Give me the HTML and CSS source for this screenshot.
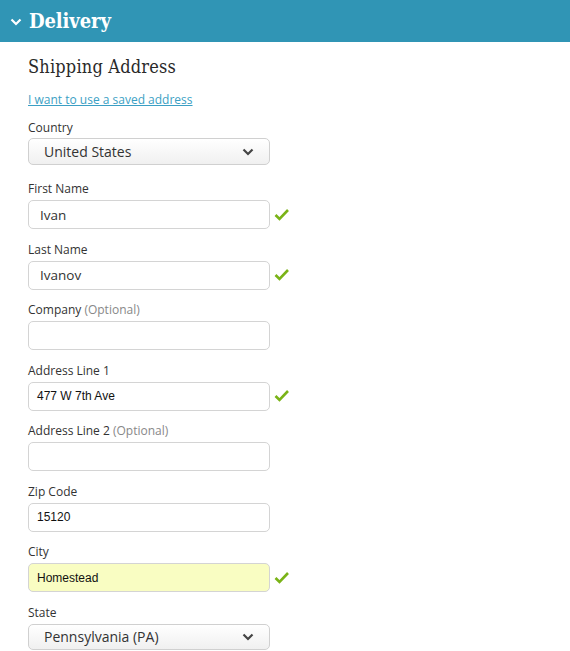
FILE: index.html
```html
<!DOCTYPE html>
<html>
<head>
<meta charset="utf-8">
<link rel="stylesheet" href="styles.css">
</head>
<body>
<div class="header">
  <svg class="chev" width="12" height="10" viewBox="0 0 12 10"><path d="M1.5 2.5 L6 7 L10.5 2.5" fill="none" stroke="#fff" stroke-width="2.2"/></svg>
  <span class="title">Delivery</span>
</div>
<div class="content">
  <h2 class="sub">Shipping Address</h2>
  <a class="link" href="#">I want to use a saved address</a>

  <div class="field first">
    <div class="label">Country</div>
    <div class="select"><span>United States</span><svg width="12" height="8" viewBox="0 0 12 8"><path d="M1.5 1.5 L6 6 L10.5 1.5" fill="none" stroke="#444" stroke-width="2.2"/></svg></div>
  </div>

  <div class="field second">
    <div class="label">First Name</div>
    <div class="row"><div class="input sans">Ivan</div><svg class="check" width="16" height="14" viewBox="0 0 16 14"><path d="M1.5 7 L5.5 11 L14 2" fill="none" stroke="#7ab317" stroke-width="2.6"/></svg></div>
  </div>

  <div class="field">
    <div class="label">Last Name</div>
    <div class="row"><div class="input sans">Ivanov</div><svg class="check" width="16" height="14" viewBox="0 0 16 14"><path d="M1.5 7 L5.5 11 L14 2" fill="none" stroke="#7ab317" stroke-width="2.6"/></svg></div>
  </div>

  <div class="field">
    <div class="label">Company <span class="opt">(Optional)</span></div>
    <div class="row"><div class="input"></div></div>
  </div>

  <div class="field">
    <div class="label">Address Line 1</div>
    <div class="row"><div class="input arial">477 W 7th Ave</div><svg class="check" width="16" height="14" viewBox="0 0 16 14"><path d="M1.5 7 L5.5 11 L14 2" fill="none" stroke="#7ab317" stroke-width="2.6"/></svg></div>
  </div>

  <div class="field">
    <div class="label">Address Line 2 <span class="opt">(Optional)</span></div>
    <div class="row"><div class="input"></div></div>
  </div>

  <div class="field">
    <div class="label">Zip Code</div>
    <div class="row"><div class="input arial">15120</div></div>
  </div>

  <div class="field">
    <div class="label">City</div>
    <div class="row"><div class="input arial filled">Homestead</div><svg class="check" width="16" height="14" viewBox="0 0 16 14"><path d="M1.5 7 L5.5 11 L14 2" fill="none" stroke="#7ab317" stroke-width="2.6"/></svg></div>
  </div>

  <div class="field state">
    <div class="label">State</div>
    <div class="select"><span>Pennsylvania (PA)</span><svg width="12" height="8" viewBox="0 0 12 8"><path d="M1.5 1.5 L6 6 L10.5 1.5" fill="none" stroke="#444" stroke-width="2.2"/></svg></div>
  </div>
</div>
</body>
</html>
```
FILE: styles.css
```css
html, body { margin: 0; padding: 0; background: #fff; }
body { font-family: "Open Sans", "DejaVu Sans", sans-serif; color: #333; }
.header {
  height: 42px;
  background: #3095b5;
  display: flex;
  align-items: center;
  padding-left: 10px;
  box-sizing: border-box;
}
.chev { margin-right: 7px; margin-top: 1px; }
.title {
  font-family: "DejaVu Serif Condensed", "DejaVu Serif", serif;
  font-stretch: condensed;
  font-weight: bold;
  color: #fff;
  font-size: 20px;
  letter-spacing: -0.1px;
}
.content { padding-left: 28px; }
.sub {
  margin: 0;
  padding-top: 13px;
  font-family: "DejaVu Serif Condensed", "DejaVu Serif", serif;
  font-stretch: condensed;
  font-weight: normal;
  font-size: 18px;
  line-height: 24px;
  color: #2a2a2a;
  letter-spacing: 0.2px;
}
.link {
  display: block;
  margin-top: 13px;
  font-size: 12px;
  line-height: 16px;
  color: #3b9fc4;
  text-decoration: underline;
}
.field { margin-top: 12.5px; }
.field.first { margin-top: 12px; }
.field.second { margin-top: 16px; }
.label { font-size: 12px; line-height: 16px; height: 16px; color: #333; }
.opt { color: #888; }
.row { display: flex; align-items: center; margin-top: 3px; }
.input {
  box-sizing: border-box;
  width: 242px;
  height: 29px;
  border: 1px solid #d4d4d4;
  border-radius: 5px;
  background: #fff;
  padding-left: 11px;
  display: flex;
  align-items: center;
  font-size: 14px;
}
.input.sans { font-family: "Open Sans", "DejaVu Sans", sans-serif; color: #333; font-size: 13.5px; }
.input.arial { font-family: "Liberation Sans", Arial, sans-serif; font-size: 12px; color: #111; padding-left: 8px; }
.input.filled { background: #f9fdc2; }
.check { margin-left: 4px; }
.select {
  box-sizing: border-box;
  width: 242px;
  height: 27px;
  margin-top: 2px;
  border: 1px solid #d0d0d0;
  border-radius: 5px;
  background: linear-gradient(#ffffff, #f0f0f0);
  display: flex;
  align-items: center;
  justify-content: space-between;
  padding: 0 15px 0 15px;
  font-size: 14px;
  color: #333;
}
.field.state .select { height: 26px; margin-top: 3px; }
```
